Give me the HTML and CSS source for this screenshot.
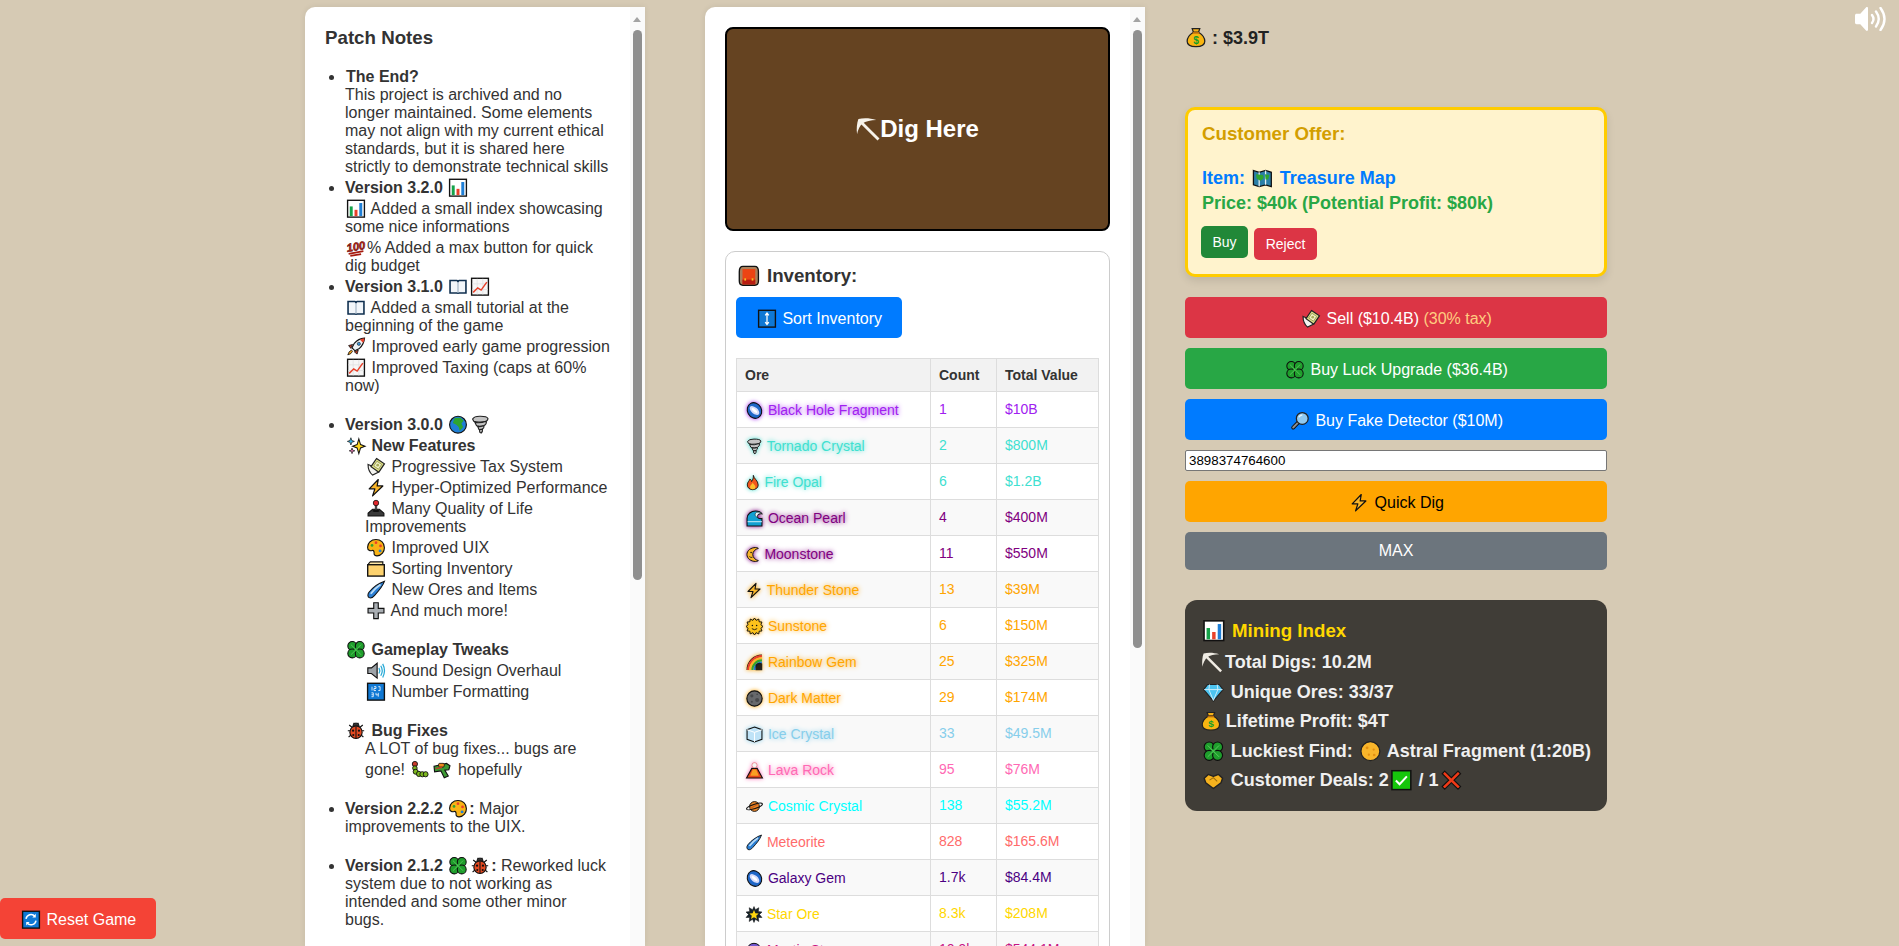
FILE: index.html
```html
<!DOCTYPE html>
<html lang="en">
<head>
<meta charset="utf-8">
<title>Mining Game</title>
<link rel="stylesheet" href="styles.css">
</head>
<body>
<svg class="sprite" aria-hidden="true">
<defs>
<g id="chart"><rect x=".6" y=".6" width="14.8" height="14.8" fill="#fff" stroke="#111" stroke-width="1.2"/><rect x="2.5" y="6" width="2.6" height="8.5" fill="#16a34a"/><rect x="6.7" y="9" width="2.6" height="5.5" fill="#e8412a"/><rect x="10.9" y="3" width="2.6" height="11.5" fill="#1f7fd6"/></g>
<g id="hundred"><text x="8" y="10.5" class="hundred-text" text-anchor="middle" transform="rotate(-10 8 8)">100</text><path d="M1.5 13.5 L14.5 11 M3 15.2 L12.5 13.6" stroke="#a61b0f" stroke-width="1.5" fill="none"/></g>
<g id="book"><path d="M1 2.5 H7 Q8 2.8 8 4 Q8 2.8 9 2.5 H15 V13.5 H9 Q8 13.7 8 14.5 Q8 13.7 7 13.5 H1 Z" fill="#f2f6fa" stroke="#0f2f4f" stroke-width="1.4"/><path d="M8 4 V14" stroke="#7b93a8" stroke-width=".7"/></g>
<g id="trend"><rect x=".6" y=".6" width="14.8" height="14.8" fill="#f6f6f6" stroke="#111" stroke-width="1.2"/><path d="M5.5 1 V15 M10.5 1 V15 M1 5.5 H15 M1 10.5 H15" stroke="#ddd" stroke-width=".6"/><path d="M2 13 L6 9 L9 11 L14 4" fill="none" stroke="#e8412a" stroke-width="1.3"/></g>
<g id="rocket"><path d="M15.5 .5 Q10 1 6.5 5 L4.5 9 L7 11.5 L11 9.5 Q15 6 15.5 .5Z" fill="#eef2f5" stroke="#111" stroke-width="1"/><path d="M15.5 .5 Q13 .7 11.5 1.8 L14.2 4.5 Q15.3 3 15.5 .5Z" fill="#e8412a"/><circle cx="10.5" cy="5.5" r="1.4" fill="#3a93d8" stroke="#111" stroke-width=".5"/><path d="M5 6 L1.5 7 L3.5 9.5Z M10 11 L9 14.5 L6.5 12.5Z" fill="#c33a22" stroke="#111" stroke-width=".7"/><path d="M4 11 Q1.5 12 .8 15.2 Q4 14.5 5 12Z" fill="#f5a21c" stroke="#111" stroke-width=".7"/></g>
<g id="globe"><circle cx="8" cy="8" r="7.4" fill="#1f7fd6" stroke="#111" stroke-width="1"/><path d="M5 2 L10 1.8 L13 4.5 L11 7 L12.5 10 L9.5 13.5 L8.6 10 L6.5 8 L3.5 6.5Z" fill="#2fa530"/></g>
<g id="tornado" fill="#c4c4c4" stroke="#222" stroke-width="1"><path d="M1.5 3 Q3 .5 8 .6 Q14 .5 15 2.5 Q15 5 11 5.5 Q5 6.2 2.5 5Z"/><path d="M3.5 6 Q8 7 13.5 5 Q14 7.5 11.5 8.8 Q8 10 5 9Z"/><path d="M6 9.5 Q9 10 11.5 9 Q11.8 11 10 12 Q8.5 12.6 7 12Z"/><path d="M7.5 12.3 L10.2 12 Q10.5 14 9 15.4 L7.8 14.6Z"/></g>
<g id="sparkles"><path d="M10.5 2 L12 7 L16 8.5 L12 10 L10.5 15 L9 10 L5 8.5 L9 7Z" fill="#ffd81f" stroke="#111" stroke-width=".9"/><path d="M3.5 1 L4.3 3.4 L6.6 4.2 L4.3 5 L3.5 7.4 L2.7 5 L.4 4.2 L2.7 3.4Z" fill="#38b6e8" stroke="#111" stroke-width=".6"/><path d="M4.5 10 L5.1 11.9 L7 12.5 L5.1 13.1 L4.5 15 L3.9 13.1 L2 12.5 L3.9 11.9Z" fill="#ec6fae" stroke="#111" stroke-width=".6"/></g>
<g id="wingbill"><path d="M1 6 L6 8 L10 13 L5 15.4 Q1 12 1 6Z" fill="#f4f4f0" stroke="#222" stroke-width="1"/><path d="M8.5 .8 L15.4 5.5 L10.5 12.8 L3.6 8Z" fill="#dfe08a" stroke="#222" stroke-width="1.1"/><path d="M8.8 3.2 L13 6 L10.2 10.2 L6 7.4Z" fill="#f2f3c6" stroke="#8b8f4b" stroke-width=".7"/><circle cx="9.5" cy="6.7" r="1.2" fill="#a9ad5c"/></g>
<g id="bolt"><path d="M10 .8 L2 9 H7 L5 15.2 L14 6.5 H9 Z" fill="#f9b52a" stroke="#111" stroke-width="1.1" stroke-linejoin="round"/></g>
<g id="joystick"><path d="M1 12 L5 8.5 H11 L15 12 V14.5 H1Z" fill="#3a3a3a" stroke="#111" stroke-width=".9"/><rect x="7.2" y="4" width="1.6" height="6" fill="#555" stroke="#111" stroke-width=".4"/><circle cx="8" cy="3" r="2.4" fill="#e0262b" stroke="#111" stroke-width=".7"/><ellipse cx="8" cy="10" rx="3" ry="1" fill="#111"/></g>
<g id="palette"><path d="M8 .8 C3.5 .8 .6 4 .6 7.5 C.6 10.5 3 11 4.5 10.5 C6 10 6.5 11.5 6.3 13 C6.2 14.5 7.5 15.3 9 15.2 C13 14.8 15.4 11.5 15.4 8 C15.4 3.5 12 .8 8 .8Z" fill="#f9b316" stroke="#111" stroke-width="1"/><circle cx="4.5" cy="6" r="1.2" fill="#2fa530"/><circle cx="8" cy="3.6" r="1.2" fill="#e8412a"/><circle cx="12" cy="6.4" r="1.2" fill="#e8412a"/><circle cx="11.6" cy="10.8" r="1.3" fill="#1f7fd6"/></g>
<g id="folder"><path d="M1.5 5 V3.6 L3 2 H14 V5" fill="#ffe9a8" stroke="#111" stroke-width="1"/><rect x=".7" y="4.5" width="14.6" height="10" fill="#fdd26e" stroke="#111" stroke-width="1.2"/></g>
<g id="comet"><path d="M15.5 .5 C11 2 5 6 1.8 10.3 C.3 12.4 .8 14.4 2 15 C3.5 15.8 5.3 14.8 6.8 13 C10 9.5 14 5 15.5 .5Z" fill="#2b7fd4" stroke="#111" stroke-width=".9"/><path d="M12 3.5 C9 5.5 5.5 8.6 3.4 11.5" stroke="#b9dcf7" stroke-width="1.6" fill="none"/></g>
<g id="plus"><path d="M6 1 H10 V6 H15 V10 H10 V15 H6 V10 H1 V6 H6Z" fill="#a9aeb3" stroke="#111" stroke-width="1"/></g>
<g id="clover"><g fill="#1f9e2c" stroke="#0d0d0d" stroke-width=".9"><circle cx="4.7" cy="4.7" r="3.9"/><circle cx="11.3" cy="4.7" r="3.9"/><circle cx="4.7" cy="11.3" r="3.9"/><circle cx="11.3" cy="11.3" r="3.9"/></g><circle cx="8" cy="8" r="1.7" fill="#1f9e2c"/><path d="M8 8 L3.5 3.5 M8 8 L12.5 3.5 M8 8 L3.5 12.5 M8 8 L12.5 12.5" stroke="#6fd26f" stroke-width=".6"/></g>
<g id="speaker"><path d="M.8 5.5 H4 L9 1.5 V14.5 L4 10.5 H.8Z" fill="#9ea3a8" stroke="#111" stroke-width="1"/><path d="M10.6 5.5 Q12 8 10.6 10.5 M12.2 3.6 Q14.8 8 12.2 12.4 M13.9 2 Q17 8 13.9 14" stroke="#27a9d6" stroke-width="1.1" fill="none"/></g>
<g id="numbers"><rect x=".6" y=".6" width="14.8" height="14.8" fill="#0f78d4" stroke="#111" stroke-width="1.2"/><path d="M4.5 3.6 V7 M6.2 3.6 H8 V5.2 H6.2 V7 H8 M10 3.6 H11.6 V7 H10 M4 9 H5.6 V12.4 H4 M4 10.7 H5.6 M8 9 V10.8 H10 M10 9 V12.4" stroke="#fff" stroke-width=".7" fill="none"/></g>
<g id="bug"><path d="M2 3 L4.5 5 M14 3 L11.5 5 M.8 8 H3 M15.2 8 H13 M1.5 13.5 L4 11.5 M14.5 13.5 L12 11.5 M6 1 L6.8 3 M10 1 L9.2 3" stroke="#111" stroke-width="1"/><circle cx="8" cy="4" r="2.8" fill="#333" stroke="#111" stroke-width=".7"/><ellipse cx="8" cy="9.3" rx="5.4" ry="5.6" fill="#e34a22" stroke="#111" stroke-width="1"/><path d="M8 4 V15" stroke="#111" stroke-width=".9"/><circle cx="5.4" cy="8" r="1" fill="#111"/><circle cx="10.6" cy="8" r="1" fill="#111"/><circle cx="5.6" cy="11.7" r=".9" fill="#111"/><circle cx="10.4" cy="11.7" r=".9" fill="#111"/></g>
<g id="caterpillar"><circle cx="3.5" cy="3" r="2.3" fill="#c9392a" stroke="#111" stroke-width=".8"/><g fill="#7cb61f" stroke="#111" stroke-width=".8"><circle cx="3.5" cy="6.6" r="2"/><circle cx="4.2" cy="9.8" r="2.2"/><ellipse cx="7" cy="11.7" rx="2.1" ry="2.3"/><ellipse cx="10" cy="12" rx="2.1" ry="2.3"/><ellipse cx="13" cy="12" rx="2.1" ry="2.3"/></g></g>
<g id="gun"><path d="M1 5 L12 2.5 L15 4.5 L14 8 L10.5 8.5 L13.5 13.5 L10 15 L7 9 L1.5 9.8Z" fill="#3c9a34" stroke="#111" stroke-width="1"/><rect x="5" y="2.4" width="5" height="3.3" rx="1" fill="#ef8b1d" stroke="#111" stroke-width=".7"/><path d="M2.5 7 L8 6" stroke="#c9392a" stroke-width="1.2"/></g>
<g id="backpack"><path d="M.8 5 Q.8 1 3.5 1 H12.5 Q15.2 1 15.2 5 V12 Q15.2 15.2 12.5 15.2 H3.5 Q.8 15.2 .8 12Z" fill="#a9805c" stroke="#111" stroke-width="1"/><path d="M3.2 3 H12.8 V14.5 H3.2Z" fill="#ec4413"/><rect x="3.2" y="11" width="9.6" height="3.5" fill="#b81d12"/><rect x="4.6" y="10" width="1.3" height="1.7" fill="#f7c021"/><rect x="10.1" y="10" width="1.3" height="1.7" fill="#f7c021"/></g>
<g id="updown"><rect x=".6" y=".6" width="14.8" height="14.8" fill="#0f78d4" stroke="#111" stroke-width="1.2"/><path d="M8 3.5 V12.5 M6.4 5 L8 3 L9.6 5 M6.4 11 L8 13 L9.6 11" stroke="#fff" stroke-width="1.1" fill="none"/></g>
<g id="gem"><ellipse cx="8" cy="8" rx="6.6" ry="7.6" transform="rotate(-28 8 8)" fill="#1f67c8" stroke="#111" stroke-width="1"/><ellipse cx="8" cy="8" rx="3" ry="5.4" transform="rotate(-50 8 8)" fill="#d7dcfb"/><ellipse cx="8" cy="8" rx="1.3" ry="3.2" transform="rotate(-50 8 8)" fill="#fff"/></g>
<g id="fire"><path d="M8.6 .6 C9 4 13.6 6 13.6 10.6 C13.6 13.5 11 15.4 8 15.4 C5 15.4 2.4 13.5 2.4 10.5 C2.4 7.5 4.5 6.5 5 4.5 C6.3 5 6.7 6 6.8 7 C8 5.5 8.8 3.5 8.6 .6Z" fill="#f1581e" stroke="#111" stroke-width=".9"/><path d="M8 8 C8.6 10 10.8 10.8 10.8 12.6 C10.8 14.2 9.5 15 8 15 C6.5 15 5.2 14.2 5.2 12.6 C5.2 10.8 7.4 10 8 8Z" fill="#fbc02d"/></g>
<g id="wave"><path d="M1 15 V8 C1 3.5 5 1 9 1 C12 1 14 2 15 3.5 C12 3 10 4.5 11 7 C12 8.5 13.8 8.2 15 8 V15Z" fill="#12a0d2" stroke="#111" stroke-width="1"/><path d="M15 3.5 C12 3 10 4.5 11 7 C8 6 8 3.5 10 2.2 C12 1.8 14 2.3 15 3.5Z" fill="#eaf7fb" stroke="#111" stroke-width=".5"/><path d="M1.5 11 H15" stroke="#c8eaf6" stroke-width="1"/></g>
<g id="moonface"><path d="M11 .8 C6 .8 2 4 2 8 C2 12 6 15.2 11 15.2 C12.4 15.2 13.4 14.8 13.8 14.3 C10.6 13.6 8 11 8 8 C8 5 10.6 2.4 13.8 1.7 C13.4 1.2 12.4 .8 11 .8Z" fill="#f9b52a" stroke="#111" stroke-width="1"/><circle cx="6.3" cy="6" r=".8" fill="#111"/><path d="M4.5 10 Q6 11.5 7.6 11" stroke="#111" stroke-width=".8" fill="none"/></g>
<g id="sun"><path d="M8 0 L9.5 2.2 L12 1 L12.4 3.6 L15 3.8 L14 6.3 L16 8 L14 9.7 L15 12.2 L12.4 12.4 L12 15 L9.5 13.8 L8 16 L6.5 13.8 L4 15 L3.6 12.4 L1 12.2 L2 9.7 L0 8 L2 6.3 L1 3.8 L3.6 3.6 L4 1 L6.5 2.2Z" fill="#fcc21b" stroke="#111" stroke-width=".9"/><circle cx="6" cy="7" r=".7" fill="#111"/><circle cx="10" cy="7" r=".7" fill="#111"/><path d="M5.5 10 Q8 12 10.5 10" stroke="#111" stroke-width=".8" fill="none"/></g>
<g id="rainbow" fill="none"><path d="M1 15 A14 14 0 0 1 15 1" stroke="#111" stroke-width="1"/><path d="M2 15 A13 13 0 0 1 15 2" stroke="#e8412a" stroke-width="2"/><path d="M4 15 A11 11 0 0 1 15 4" stroke="#f9b52a" stroke-width="2"/><path d="M6 15 A9 9 0 0 1 15 6" stroke="#2fa530" stroke-width="2"/><path d="M8 15 A7 7 0 0 1 15 8" stroke="#1f7fd6" stroke-width="2"/><path d="M9 15.3 V10 A5 5 0 0 1 15.3 9 V15.3Z" fill="#111" stroke="none" opacity=".9"/></g>
<g id="newmoon"><circle cx="8" cy="8" r="7.2" fill="#67696c" stroke="#111" stroke-width="1.1"/><circle cx="5.5" cy="5.5" r="1.5" fill="#47494b"/><circle cx="10.5" cy="9.5" r="1.9" fill="#47494b"/><circle cx="5.5" cy="11" r="1" fill="#47494b"/><circle cx="10.5" cy="4" r=".8" fill="#47494b"/></g>
<g id="ice"><path d="M8 1 L15 3.5 V12.5 L8 15 L1 12.5 V3.5Z" fill="#bfe3f7" stroke="#111" stroke-width="1"/><path d="M1 3.5 L8 6 L15 3.5 M8 6 V15" stroke="#fff" stroke-width=".9" fill="none"/></g>
<g id="volcano"><path d="M5.5 6 H10.5 L15.5 15 H.5Z" fill="#e5471c" stroke="#111" stroke-width="1"/><path d="M6.4 7 H9.6 L12 13 H4Z" fill="#f8a023"/><circle cx="8" cy="3" r="2.4" fill="#f5f5f5" stroke="#d33" stroke-width=".4"/></g>
<g id="saturn"><circle cx="8" cy="8" r="4.6" fill="#ec8628" stroke="#111" stroke-width=".9"/><path d="M4 9.8 L12 5.4" stroke="#c95f14" stroke-width="1"/><ellipse cx="8" cy="8" rx="7.8" ry="2" transform="rotate(-18 8 8)" fill="none" stroke="#111" stroke-width="1.1"/></g>
<g id="burst"><path d="M8 0 L9.4 3.2 L12.8 1.2 L12.3 5 L16 5.5 L13.5 8 L16 11 L12.3 11 L12.8 15 L9.4 12.8 L8 16 L6.6 12.8 L3.2 15 L3.7 11 L0 11 L2.5 8 L0 5.5 L3.7 5 L3.2 1.2 L6.6 3.2Z" fill="#15222b" stroke="#111" stroke-width=".5"/><path d="M8 3.6 L9.4 6.7 L12.7 7 L10.2 9.2 L11 12.4 L8 10.7 L5 12.4 L5.8 9.2 L3.3 7 L6.6 6.7Z" fill="#fdd60f"/></g>
<g id="orb"><circle cx="8" cy="8" r="7.2" fill="#7457d1" stroke="#111" stroke-width="1"/></g>
<g id="bag"><path d="M5 1 H11 L10 4 H6Z" fill="#f5b11a" stroke="#222" stroke-width="1"/><path d="M5.7 4 H10.3 C13.5 6 15 9 15 11 C15 14 12 15.3 8 15.3 C4 15.3 1 14 1 11 C1 9 2.5 6 5.7 4Z" fill="#f9b511" stroke="#222" stroke-width="1"/><rect x="5.4" y="3.6" width="5.2" height="1.3" fill="#b86a0d"/><text x="8" y="13" class="dollar" text-anchor="middle">$</text></g>
<g id="map"><path d="M1 2 L5.5 3.4 L10.5 2 L15 3.4 V14.6 L10.5 13.2 L5.5 14.6 L1 13.2Z" fill="#2b7fa8" stroke="#111" stroke-width="1"/><path d="M5.5 3.4 V14.6 M10.5 2 V13.2" stroke="#e6eff2" stroke-width="1"/><path d="M3 5 L8.5 5.5 L9 8 L6.5 10 L3.5 8.5 Z M10 5 L13.5 5.5 L12.5 9 L10.5 9Z" fill="#2fa530"/></g>
<g id="lens"><path d="M2 14 L6.5 9.5" stroke="#111" stroke-width="3.4" stroke-linecap="round"/><path d="M2 14 L6.5 9.5" stroke="#8b8f94" stroke-width="1.7" stroke-linecap="round"/><circle cx="10" cy="6" r="5.2" fill="#8fc9f1" stroke="#222" stroke-width="1.1"/><path d="M7 5 Q8 3 10 3" stroke="#e6f4fd" stroke-width="1.2" fill="none"/></g>
<g id="diamond"><path d="M3.5 2 H12.5 L15.6 6 L8 15 L.4 6Z" fill="#4cc4f0" stroke="#222" stroke-width=".9"/><path d="M.8 6 H15.2 M5 2 L4.5 6 L8 14.5 L11.5 6 L11 2" fill="none" stroke="#d6f2fc" stroke-width=".7"/></g>
<g id="fullmoon"><circle cx="8" cy="8" r="7.4" fill="#f9b52a" stroke="#222" stroke-width="1"/><circle cx="5.4" cy="5.4" r="1.1" fill="#e28f12"/><circle cx="10.6" cy="6.8" r=".9" fill="#e28f12"/><circle cx="6.8" cy="10.8" r=".9" fill="#e28f12"/><circle cx="11" cy="11" r="1" fill="#e28f12"/></g>
<g id="handshake"><path d="M.8 6.5 L4 3.5 L8 5 L12 3.5 L15.2 6.5 L14 10 L8 14.5 L2 10Z" fill="#f5b21e" stroke="#222" stroke-width="1.1" stroke-linejoin="round"/><path d="M5 8 L8 6 L11 9" stroke="#9a6a0a" stroke-width=".8" fill="none"/></g>
<g id="check"><rect x=".6" y=".6" width="14.8" height="14.8" fill="#16c60c" stroke="#111" stroke-width="1.2"/><path d="M3.7 8.3 L6.6 11.2 L12.3 5" stroke="#fff" stroke-width="1.6" fill="none"/></g>
<g id="cross"><path d="M2.8 .9 L8 6 L13.2 .9 L15.2 3 L10.1 8 L15.2 13 L13.2 15.1 L8 10 L2.8 15.1 L.8 13 L5.9 8 L.8 3Z" fill="#f03a17" stroke="#111" stroke-width=".9"/></g>
<g id="refresh"><rect x=".6" y=".6" width="14.8" height="14.8" fill="#0f78d4" stroke="#111" stroke-width="1.2"/><path d="M3.6 7.2 A4.5 4.5 0 0 1 11.4 5 M12.4 8.8 A4.5 4.5 0 0 1 4.6 11" fill="none" stroke="#fff" stroke-width="1.3"/><path d="M12.2 2.8 V6 H9.2Z M3.8 13.2 V10 H6.8Z" fill="#fff"/></g>
<g id="pick"><path d="M2.6 2.6 L15 15" stroke="currentColor" stroke-width="1.9" fill="none"/><path d="M.7 11.5 C.2 8 .6 4 1.6 1.4 C5 .5 9.5 .7 13.5 2 C10 2 6.5 2.8 4.2 4.4 C2.6 6 1.3 8.6 .7 11.5Z" fill="currentColor"/></g>
</defs>
</svg>

<main class="game">
  <section class="panel panel-notes">
    <div class="panel-body">
      <h3 class="panel-title">Patch Notes</h3>
      <ul class="notes">
        <li><strong class="nudge">The End?</strong><br>This project is archived and no longer maintained. Some elements may not align with my current ethical standards, but it is shared here strictly to demonstrate technical skills</li>
        <li><strong>Version 3.2.0 <svg class="e" viewBox="0 0 16 16"><use href="#chart"/></svg></strong><br><svg class="e" viewBox="0 0 16 16"><use href="#chart"/></svg> Added a small index showcasing some nice informations<br><svg class="e" viewBox="0 0 16 16"><use href="#hundred"/></svg>% Added a max button for quick dig budget</li>
        <li><strong>Version 3.1.0 <svg class="e" viewBox="0 0 16 16"><use href="#book"/></svg><svg class="e" viewBox="0 0 16 16"><use href="#trend"/></svg></strong><br><svg class="e" viewBox="0 0 16 16"><use href="#book"/></svg> Added a small tutorial at the beginning of the game<br><svg class="e" viewBox="0 0 16 16"><use href="#rocket"/></svg> Improved early game progression<br><svg class="e" viewBox="0 0 16 16"><use href="#trend"/></svg> Improved Taxing (caps at 60% now)<br><br></li>
        <li><strong>Version 3.0.0 <svg class="e" viewBox="0 0 16 16"><use href="#globe"/></svg><svg class="e" viewBox="0 0 16 16"><use href="#tornado"/></svg></strong><br>
          <strong><svg class="e" viewBox="0 0 16 16"><use href="#sparkles"/></svg> New Features</strong>
          <ul class="sub">
            <li><svg class="e" viewBox="0 0 16 16"><use href="#wingbill"/></svg> Progressive Tax System</li>
            <li><svg class="e" viewBox="0 0 16 16"><use href="#bolt"/></svg> Hyper-Optimized Performance</li>
            <li><svg class="e" viewBox="0 0 16 16"><use href="#joystick"/></svg> Many Quality of Life Improvements</li>
            <li><svg class="e" viewBox="0 0 16 16"><use href="#palette"/></svg> Improved UIX</li>
            <li><svg class="e" viewBox="0 0 16 16"><use href="#folder"/></svg> Sorting Inventory</li>
            <li><svg class="e" viewBox="0 0 16 16"><use href="#comet"/></svg> New Ores and Items</li>
            <li><svg class="e" viewBox="0 0 16 16"><use href="#plus"/></svg> And much more!</li>
          </ul>
          <br>
          <strong><svg class="e" viewBox="0 0 16 16"><use href="#clover"/></svg> Gameplay Tweaks</strong>
          <ul class="sub">
            <li><svg class="e" viewBox="0 0 16 16"><use href="#speaker"/></svg> Sound Design Overhaul</li>
            <li><svg class="e" viewBox="0 0 16 16"><use href="#numbers"/></svg> Number Formatting</li>
          </ul>
          <br>
          <strong><svg class="e" viewBox="0 0 16 16"><use href="#bug"/></svg> Bug Fixes</strong>
          <div class="sub">A LOT of bug fixes... bugs are gone! <svg class="e" viewBox="0 0 16 16"><use href="#caterpillar"/></svg><svg class="e" viewBox="0 0 16 16"><use href="#gun"/></svg> hopefully</div>
          <br>
        </li>
        <li><strong>Version 2.2.2 <svg class="e" viewBox="0 0 16 16"><use href="#palette"/></svg>:</strong> Major improvements to the UIX.<br><br></li>
        <li><strong>Version 2.1.2 <svg class="e" viewBox="0 0 16 16"><use href="#clover"/></svg><svg class="e" viewBox="0 0 16 16"><use href="#bug"/></svg>:</strong> Reworked luck system due to not working as intended and some other minor bugs.</li>
      </ul>
    </div>
    <div class="scrollbar"><span class="scroll-arrow"></span><span class="scroll-thumb thumb-notes"></span></div>
  </section>

  <section class="panel panel-mine">
    <div class="panel-body">
      <button class="dig"><svg class="pick" viewBox="0 0 16 16"><use href="#pick"/></svg>Dig Here</button>
      <div class="inventory">
        <h3 class="inv-title"><svg class="e" viewBox="0 0 16 16"><use href="#backpack"/></svg> Inventory:</h3>
        <button class="btn btn-blue btn-sort"><svg class="e" viewBox="0 0 16 16"><use href="#updown"/></svg> Sort Inventory</button>
        <table class="ores">
          <thead><tr><th>Ore</th><th>Count</th><th>Total Value</th></tr></thead>
          <tbody>
            <tr class="c-blackhole glow"><td><svg class="e" viewBox="0 0 16 16"><use href="#gem"/></svg> Black Hole Fragment</td><td>1</td><td>$10B</td></tr>
            <tr class="c-turq glow"><td><svg class="e e-mid" viewBox="0 0 16 16"><use href="#tornado"/></svg> Tornado Crystal</td><td>2</td><td>$800M</td></tr>
            <tr class="c-turq glow"><td><svg class="e e-slim" viewBox="0 0 16 16"><use href="#fire"/></svg> Fire Opal</td><td>6</td><td>$1.2B</td></tr>
            <tr class="c-purple glow"><td><svg class="e" viewBox="0 0 16 16"><use href="#wave"/></svg> Ocean Pearl</td><td>4</td><td>$400M</td></tr>
            <tr class="c-purple glow"><td><svg class="e e-slim" viewBox="0 0 16 16"><use href="#moonface"/></svg> Moonstone</td><td>11</td><td>$550M</td></tr>
            <tr class="c-orange glow"><td><svg class="e e-mid" viewBox="0 0 16 16"><use href="#bolt"/></svg> Thunder Stone</td><td>13</td><td>$39M</td></tr>
            <tr class="c-orange glow"><td><svg class="e" viewBox="0 0 16 16"><use href="#sun"/></svg> Sunstone</td><td>6</td><td>$150M</td></tr>
            <tr class="c-orange glow"><td><svg class="e" viewBox="0 0 16 16"><use href="#rainbow"/></svg> Rainbow Gem</td><td>25</td><td>$325M</td></tr>
            <tr class="c-orange glow"><td><svg class="e" viewBox="0 0 16 16"><use href="#newmoon"/></svg> Dark Matter</td><td>29</td><td>$174M</td></tr>
            <tr class="c-sky glow"><td><svg class="e" viewBox="0 0 16 16"><use href="#ice"/></svg> Ice Crystal</td><td>33</td><td>$49.5M</td></tr>
            <tr class="c-pink glow"><td><svg class="e" viewBox="0 0 16 16"><use href="#volcano"/></svg> Lava Rock</td><td>95</td><td>$76M</td></tr>
            <tr class="c-cyan"><td><svg class="e" viewBox="0 0 16 16"><use href="#saturn"/></svg> Cosmic Crystal</td><td>138</td><td>$55.2M</td></tr>
            <tr class="c-red"><td><svg class="e e-mid" viewBox="0 0 16 16"><use href="#comet"/></svg> Meteorite</td><td>828</td><td>$165.6M</td></tr>
            <tr class="c-indigo"><td><svg class="e" viewBox="0 0 16 16"><use href="#gem"/></svg> Galaxy Gem</td><td>1.7k</td><td>$84.4M</td></tr>
            <tr class="c-gold"><td><svg class="e e-mid" viewBox="0 0 16 16"><use href="#burst"/></svg> Star Ore</td><td>8.3k</td><td>$208M</td></tr>
            <tr class="c-mystic"><td><svg class="e e-mid" viewBox="0 0 16 16"><use href="#orb"/></svg> Mystic Stone</td><td>10.9k</td><td>$544.1M</td></tr>
          </tbody>
        </table>
      </div>
    </div>
    <div class="scrollbar"><span class="scroll-arrow"></span><span class="scroll-thumb thumb-mine"></span></div>
  </section>

  <aside class="side">
    <div class="money"><svg class="e" viewBox="0 0 16 16"><use href="#bag"/></svg> : $3.9T</div>
    <div class="offer">
      <h3 class="offer-title">Customer Offer:</h3>
      <p class="offer-item"><span>Item:</span> <svg class="e" viewBox="0 0 16 16"><use href="#map"/></svg> Treasure Map</p>
      <p class="offer-price">Price: $40k (Potential Profit: $80k)</p>
      <div class="offer-actions">
        <button class="mini mini-buy">Buy</button>
        <button class="mini mini-reject">Reject</button>
      </div>
    </div>
    <div class="actions">
      <button class="btn btn-red btn-wide"><svg class="e" viewBox="0 0 16 16"><use href="#wingbill"/></svg> Sell ($10.4B) <span class="tax">(30% tax)</span></button>
      <button class="btn btn-green btn-wide"><svg class="e" viewBox="0 0 16 16"><use href="#clover"/></svg> Buy Luck Upgrade ($36.4B)</button>
      <button class="btn btn-blue btn-wide"><svg class="e" viewBox="0 0 16 16"><use href="#lens"/></svg> Buy Fake Detector ($10M)</button>
      <input class="budget" type="text" value="3898374764600">
      <button class="btn btn-orange btn-wide"><svg class="e" viewBox="0 0 16 16"><use href="#bolt"/></svg> Quick Dig</button>
      <button class="btn btn-gray btn-wide">MAX</button>
    </div>
    <div class="index">
      <h3 class="index-title"><svg class="e" viewBox="0 0 16 16"><use href="#chart"/></svg> Mining Index</h3>
      <p class="index-line"><svg class="e e-pick" viewBox="0 0 16 16"><use href="#pick"/></svg>Total Digs: 10.2M</p>
      <p class="index-line"><svg class="e" viewBox="0 0 16 16"><use href="#diamond"/></svg> Unique Ores: 33/37</p>
      <p class="index-line"><svg class="e e-slim" viewBox="0 0 16 16"><use href="#bag"/></svg> Lifetime Profit: $4T</p>
      <p class="index-line"><svg class="e" viewBox="0 0 16 16"><use href="#clover"/></svg> Luckiest Find: <svg class="e" viewBox="0 0 16 16"><use href="#fullmoon"/></svg> Astral Fragment (1:20B)</p>
      <p class="index-line"><svg class="e" viewBox="0 0 16 16"><use href="#handshake"/></svg> Customer Deals: 2<svg class="e" viewBox="0 0 16 16"><use href="#check"/></svg> / 1<svg class="e" viewBox="0 0 16 16"><use href="#cross"/></svg></p>
    </div>
  </aside>
</main>

<button class="btn reset"><svg class="e" viewBox="0 0 16 16"><use href="#refresh"/></svg> Reset Game</button>
<svg class="volume" viewBox="0 0 32 24" aria-label="Sound on"><path d="M13 1.2 V22.8 C13 24 11.7 24.2 11 23.5 L5.3 17.2 H1.6 C.7 17.2 0 16.5 0 15.6 V8.4 C0 7.5 .7 6.8 1.6 6.8 H5.3 L11 .5 C11.7 -.2 13 0 13 1.2Z" fill="#fff"/><path d="M17 8 Q20 12 17 16 M21 4.5 Q26.5 12 21 19.5 M25.5 1 Q33.5 12 25.5 23" fill="none" stroke="#fff" stroke-width="2.4" stroke-linecap="round"/></svg>
</body>
</html>
```

FILE: styles.css
```css
* { box-sizing: border-box; }

html, body {
  margin: 0;
  height: 100%;
  overflow: hidden;
}

body {
  background: #d6cab4;
  color: #333;
  font-family: "Liberation Sans", Arial, sans-serif;
  font-size: 16px;
}

.sprite { display: none; }

.hundred-text { font: italic bold 10px "Liberation Sans", sans-serif; fill: #c8261a; stroke: #5a0d08; stroke-width: .5px; }
.dollar { font: bold 8px "Liberation Sans", sans-serif; fill: #129e2a; }

/* emoji slot: mimics the advance and line height of a colour-emoji glyph */
.e {
  display: inline-block;
  width: 1.375em;
  height: 1.3125em;
  padding: .15em .12em 0;
  vertical-align: -.25em;
  overflow: visible;
}
.e-mid { width: 1.25em; }
.e-slim { width: 1.1em; padding-left: 0; padding-right: 0; }
.e-pick { width: 1.34em; color: #f0ece4; padding-left: 0; }

.game {
  display: flex;
  align-items: flex-start;
  height: 100vh;
  padding: 7px 0 0 305px;
}

.panel {
  position: relative;
  flex: none;
  height: calc(100vh - 7px);
  overflow: hidden;
  background: #fff;
  border-radius: 10px 0 0 0;
  box-shadow: 0 0 6px rgba(0, 0, 0, .08);
}
.panel-notes { width: 340px; margin-right: 60px; }
.panel-mine { width: 440px; margin-right: 40px; }

.panel-body { padding: 20px 35px 20px 20px; }

.scrollbar {
  position: absolute;
  top: 0;
  right: 0;
  bottom: 0;
  width: 15px;
  background: #fafafa;
}
.scroll-arrow {
  position: absolute;
  top: 10px;
  left: 3px;
  border-left: 4.5px solid transparent;
  border-right: 4.5px solid transparent;
  border-bottom: 5px solid #a3a3a3;
}
.scroll-thumb {
  position: absolute;
  top: 23px;
  left: 3px;
  width: 9px;
  background: #8f8f8f;
  border-radius: 5px;
}
.thumb-notes { height: 550px; }
.thumb-mine { height: 618px; }

.panel-title {
  margin: 0 0 18.72px;
  font-size: 18.72px;
  color: #333;
}

.notes { margin: 0; padding-left: 20px; }
.nudge { margin-left: 1px; }
.sub { margin: 0; padding-left: 20px; list-style: none; }

.dig {
  display: flex;
  align-items: center;
  justify-content: center;
  width: 100%;
  height: 204px;
  padding: 0;
  background: #654321;
  border: 2px solid #000;
  border-radius: 8px;
  color: #fff;
  font: bold 24px "Liberation Sans", Arial, sans-serif;
}
.pick { width: 24px; height: 24px; color: #f6f2ea; }

.inventory {
  margin-top: 20px;
  padding: 10px;
  border: 1px solid #ccc;
  border-radius: 10px;
}
.inv-title { margin: 0 0 10px; font-size: 18.72px; color: #333; }

.btn {
  display: block;
  padding: 10px 20px;
  border: 0;
  border-radius: 5px;
  color: #fff;
  font: 16px "Liberation Sans", Arial, sans-serif;
}
.btn-blue { background: #007bff; }
.btn-red { background: #dc3545; }
.btn-green { background: #28a745; }
.btn-orange { background: #ffa500; color: #000; }
.btn-gray { background: #6c757d; }
.btn-wide { width: 100%; }
.btn-sort { margin-bottom: 20px; }

.ores {
  width: 100%;
  border-collapse: collapse;
  table-layout: fixed;
  font-size: 14px;
}
.ores th, .ores td {
  height: 36px;
  padding: 8px;
  border: 1px solid #ddd;
  text-align: left;
  white-space: nowrap;
}
.ores th { height: 33px; background: #f2f2f2; color: #333; }
.ores th:nth-child(1) { width: 194px; }
.ores th:nth-child(2) { width: 66px; }
.ores tbody tr:nth-child(even) { background: #f9f9f9; }
.ores .e { width: 19px; height: 19px; padding: 2px 1px 0; vertical-align: -4px; }
.ores .e-mid { width: 18px; }
.ores .e-slim { width: 15.5px; padding: 2px 0 0; }

.c-blackhole { color: #a020f0; }
.c-turq { color: #40e0d0; }
.c-purple { color: #800080; }
.c-orange { color: #ffa500; }
.c-sky { color: #87ceeb; }
.c-pink { color: #ff69b4; }
.c-cyan { color: #00ffff; }
.c-red { color: #ff6b6b; }
.c-indigo { color: #4b0082; }
.c-gold { color: #ffd700; }
.c-mystic { color: #c71585; }
.glow td:first-child { text-shadow: 0 0 5px currentColor; }
.glow .e { filter: drop-shadow(0 0 2px currentColor); }

.side { flex: none; width: 422px; padding-top: 18px; }

.money {
  height: 21px;
  margin: 0 0 61px;
  font-size: 18px;
  font-weight: bold;
  color: #222;
  white-space: nowrap;
}
.money .e { width: 1.22em; padding: .08em .05em 0; }

.offer {
  padding: 13px 13px 14px;
  background: #fff3cd;
  border: 3px solid #ffcc00;
  border-radius: 10px;
  box-shadow: 0 4px 8px rgba(0, 0, 0, .1);
  font-size: 18px;
  font-weight: bold;
}
.offer-title { margin: 0 0 20px 1px; font-size: 18.72px; color: #d39e00; }
.offer-item { margin: 0 0 4px 1px; color: #007bff; }
.offer-price { margin: 0 0 14px 1px; color: #28a745; }
.offer-actions { display: flex; gap: 6px; }
.mini {
  height: 32px;
  padding: 0 11.5px;
  border: 0;
  border-radius: 5px;
  color: #fff;
  font: 14px "Liberation Sans", Arial, sans-serif;
}
.mini-buy { background: #218838; transform: translateY(-2px); }
.mini-reject { background: #dc3545; }

.actions {
  display: flex;
  flex-direction: column;
  gap: 10px;
  margin-top: 20px;
}
.tax { color: #ffcc80; }
.budget {
  width: 100%;
  height: 21px;
  padding: 1px 3px;
  background: #fff;
  border: 1px solid #767676;
  border-radius: 2px;
  color: #000;
  font: 13.333px "Liberation Sans", Arial, sans-serif;
}

.index {
  margin-top: 30px;
  padding: 17px 16px 14px;
  background: #403d37;
  border-radius: 12px;
  color: #f0f0f0;
  font-size: 18px;
  font-weight: bold;
}
.index-title { margin: 0 0 7px; font-size: 18.72px; color: #ffd700; }
.index-line { margin: 0 0 5.4px; white-space: nowrap; }

.reset {
  position: fixed;
  left: 0;
  bottom: 7px;
  background: #f44336;
  padding: 10px 20px;
}

.volume {
  position: fixed;
  top: 7px;
  right: 12px;
  width: 32px;
  height: 24px;
}
```
